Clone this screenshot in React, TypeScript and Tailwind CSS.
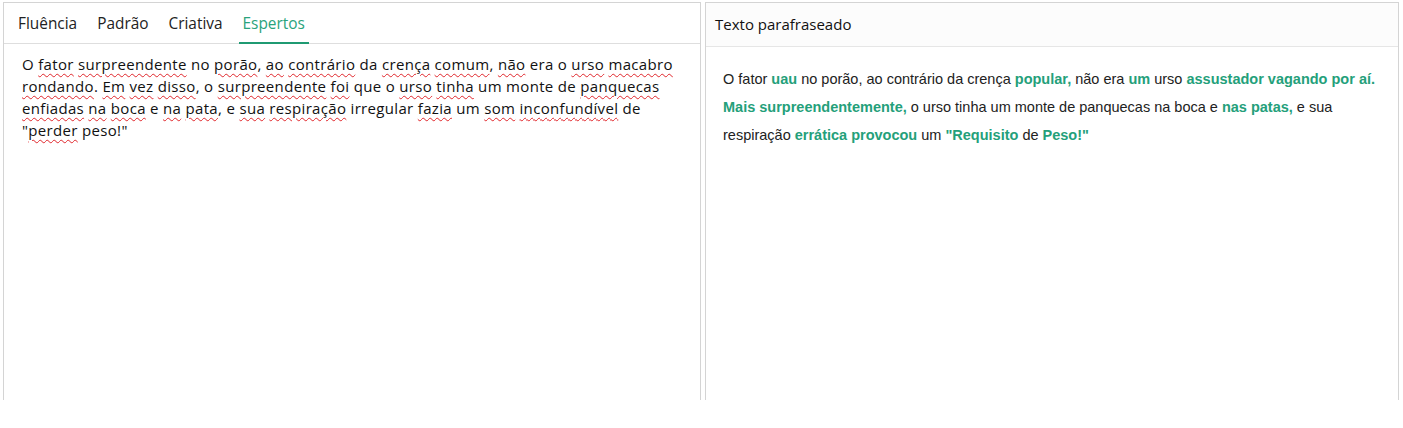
import { useState } from 'react';

const tabs = ['Fluência', 'Padrão', 'Criativa', 'Espertos'];

// words with red wavy underline (spell check look)
type Piece = { t: string; u?: boolean };

const original: Piece[] = [
  { t: 'O ' }, { t: 'fator', u: true }, { t: ' ' }, { t: 'surpreendente', u: true }, { t: ' no ' },
  { t: 'porão', u: true }, { t: ', ' }, { t: 'ao', u: true }, { t: ' ' }, { t: 'contrário', u: true },
  { t: ' da ' }, { t: 'crença', u: true }, { t: ' ' }, { t: 'comum', u: true }, { t: ', ' },
  { t: 'não', u: true }, { t: ' era o ' }, { t: 'urso', u: true }, { t: ' ' }, { t: 'macabro', u: true },
  { t: ' ' }, { t: 'rondando', u: true }, { t: '. ' }, { t: 'Em', u: true }, { t: ' ' }, { t: 'vez', u: true },
  { t: ' ' }, { t: 'disso', u: true }, { t: ', o ' }, { t: 'surpreendente', u: true }, { t: ' ' },
  { t: 'foi', u: true }, { t: ' que o ' }, { t: 'urso', u: true }, { t: ' ' }, { t: 'tinha', u: true },
  { t: ' um monte de ' }, { t: 'panquecas', u: true }, { t: ' ' }, { t: 'enfiadas', u: true }, { t: ' ' },
  { t: 'na', u: true }, { t: ' ' }, { t: 'boca', u: true }, { t: ' e ' }, { t: 'na', u: true }, { t: ' ' },
  { t: 'pata', u: true }, { t: ', e ' }, { t: 'sua', u: true }, { t: ' ' }, { t: 'respiração', u: true },
  { t: ' irregular ' }, { t: 'fazia', u: true }, { t: ' um ' }, { t: 'som', u: true }, { t: ' ' },
  { t: 'inconfundível', u: true }, { t: ' de "' }, { t: 'perder', u: true }, { t: ' peso!"' },
];

type Out = { t: string; g?: boolean };

const paraphrased: Out[] = [
  { t: 'O fator ' }, { t: 'uau', g: true }, { t: ' no porão, ao contrário da crença ' },
  { t: 'popular,', g: true }, { t: ' não era ' }, { t: 'um', g: true }, { t: ' urso ' },
  { t: 'assustador vagando por aí.', g: true }, { t: ' ' }, { t: 'Mais surpreendentemente,', g: true },
  { t: ' o urso tinha um monte de panquecas na boca e ' }, { t: 'nas patas,', g: true },
  { t: ' e sua respiração ' }, { t: 'errática provocou', g: true }, { t: ' um ' },
  { t: '"Requisito', g: true }, { t: ' de ' }, { t: 'Peso!"', g: true },
];

export default function App() {
  const [active, setActive] = useState(3);

  return (
    <div className="w-[1403px] h-[428px] bg-white pt-[2px] pl-[3px]">
      <div className="flex h-[398px] gap-[4px]">
        {/* entrada */}
        <div className="w-[698px] border border-[#d4d4d4] border-b-0 flex flex-col">
          <div className="h-[41px] flex items-end gap-[12px] pl-[10px] border-b border-[#dedede]">
            {tabs.map((tab, i) => (
              <button
                key={tab}
                onClick={() => setActive(i)}
                className={
                  'h-[41px] px-[4px] pt-[2px] text-[15.4px] border-b-2 -mb-px ' +
                  (i === active ? 'text-[#2aa37c] border-[#1f9a72]' : 'text-[#222] border-transparent')
                }
                style={{ fontFamily: '"Open Sans", sans-serif' }}
              >
                {tab}
              </button>
            ))}
          </div>
          <p
            className="px-[18px] pt-[9px] text-[15px] leading-[22px] text-[#111] tracking-[0.33px]"
            style={{ fontFamily: '"Open Sans", sans-serif' }}
          >
            {original.map((p, i) =>
              p.u ? (
                <span key={i} className="underline decoration-wavy decoration-[#e0262b] decoration-1 underline-offset-[3px]">
                  {p.t}
                </span>
              ) : (
                <span key={i}>{p.t}</span>
              )
            )}
          </p>
        </div>

        {/* saída */}
        <div className="w-[694px] border border-[#d4d4d4] border-b-0 flex flex-col">
          <div
            className="h-[44px] flex items-center px-[9px] bg-[#fcfcfc] border-b border-[#e6e6e6] text-[15px] text-[#111]"
            style={{ fontFamily: '"Open Sans", sans-serif' }}
          >
            Texto parafraseado
          </div>
          <p
            className="px-[17px] pt-[18px] text-[14.5px] leading-[28px] text-[#222]"
            style={{ fontFamily: '"Liberation Sans", Arial, sans-serif' }}
          >
            {paraphrased.map((p, i) =>
              p.g ? (
                <span key={i} className="font-bold text-[#24a07a]">{p.t}</span>
              ) : (
                <span key={i}>{p.t}</span>
              )
            )}
          </p>
        </div>
      </div>
    </div>
  );
}
